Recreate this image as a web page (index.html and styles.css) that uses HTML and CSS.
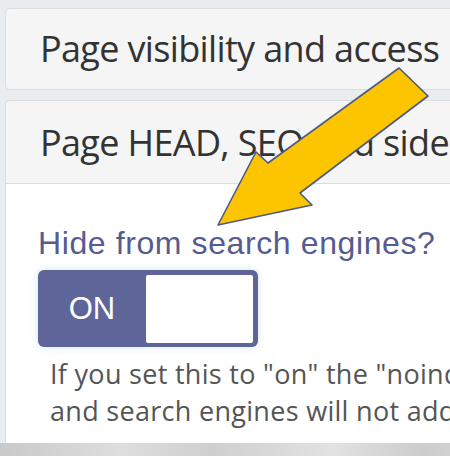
FILE: index.html
```html
<!DOCTYPE html>
<html>
<head>
<meta charset="utf-8">
<link rel="stylesheet" href="styles.css">
</head>
<body>
<div class="page">
  <div class="panel collapsed">
    <div class="panel-heading">Page visibility and access</div>
  </div>
  <div class="panel open">
    <div class="panel-heading">Page HEAD, SEO and sidebar</div>
    <div class="panel-body">
      <div class="label">Hide from search engines?</div>
      <div class="toggle">
        <span class="toggle-on">ON</span>
        <span class="toggle-knob"></span>
      </div>
      <p class="help">
        <span class="line">If you set this to "on" the "noindex" meta tag will be added</span>
        <span class="line">and search engines will not add this page to their index.</span>
      </p>
    </div>
  </div>
  <div class="backdrop"></div>
</div>
<svg class="arrow" width="450" height="456" viewBox="0 0 450 456">
  <polygon points="399,68 428,96 300,193 312,205 218,225 256,152 268,163" fill="#fdc400" stroke="#4d5a85" stroke-width="1.6" stroke-linejoin="round"/>
</svg>
</body>
</html>
```
FILE: styles.css
```css
html, body {
  margin: 0;
  padding: 0;
}
body {
  width: 450px;
  height: 456px;
  overflow: hidden;
  background: #e9edf0;
  position: relative;
}
.page {
  padding: 8px 0 0 5px;
  width: 600px;
}
.panel {
  border: 1px solid #dcdcdc;
  border-radius: 5px;
  background: #f5f5f5;
}
.panel.open {
  margin-top: 10px;
  border-bottom: none;
  border-radius: 5px 5px 0 0;
}
.panel-heading {
  font-family: "Open Sans", sans-serif;
  font-size: 36px;
  color: #333;
  height: 80px;
  line-height: 80px;
  padding-left: 34px;
  white-space: nowrap;
  overflow: hidden;
  letter-spacing: -0.65px;
}
.open .panel-heading {
  height: 82px;
  line-height: 84px;
  border-bottom: 1px solid #dcdcdc;
}
.panel-body {
  background: #fff;
  height: 258px;
  padding-left: 32px;
  padding-top: 1px;
}
.label {
  font-family: "Liberation Sans", Arial, sans-serif;
  font-size: 32px;
  color: #555c91;
  margin-top: 42px;
  line-height: 32px;
  white-space: nowrap;
  letter-spacing: 0.6px;
}
.toggle {
  display: flex;
  width: 220px;
  height: 77px;
  box-sizing: border-box;
  margin-top: 11px;
  background: #5d6599;
  border-radius: 6px;
  padding: 5px 5px 4px 0;
  box-shadow: 0 0 10px rgba(140, 190, 220, 0.35);
}
.toggle-on {
  width: 108px;
  display: flex;
  align-items: center;
  justify-content: center;
  font-family: "Liberation Sans", Arial, sans-serif;
  font-size: 31px;
  color: #fff;
}
.toggle-knob {
  flex: 1;
  background: #fff;
  border-radius: 2px;
}
.help {
  margin: 8px 0 0 12px;
  font-family: "Open Sans", sans-serif;
  font-size: 27px;
  line-height: 37px;
  color: #555;
  letter-spacing: 0.3px;
}
.line {
  display: block;
  white-space: nowrap;
}
.backdrop {
  height: 40px;
  margin-left: -5px;
  background: linear-gradient(90deg, #c9c9c9 0%, #dedede 20%, #cfcfcf 35%, #e2e2e2 55%, #cccccc 70%, #dddddd 85%, #d2d2d2 100%);
}
.arrow {
  position: absolute;
  left: 0;
  top: 0;
}
```
